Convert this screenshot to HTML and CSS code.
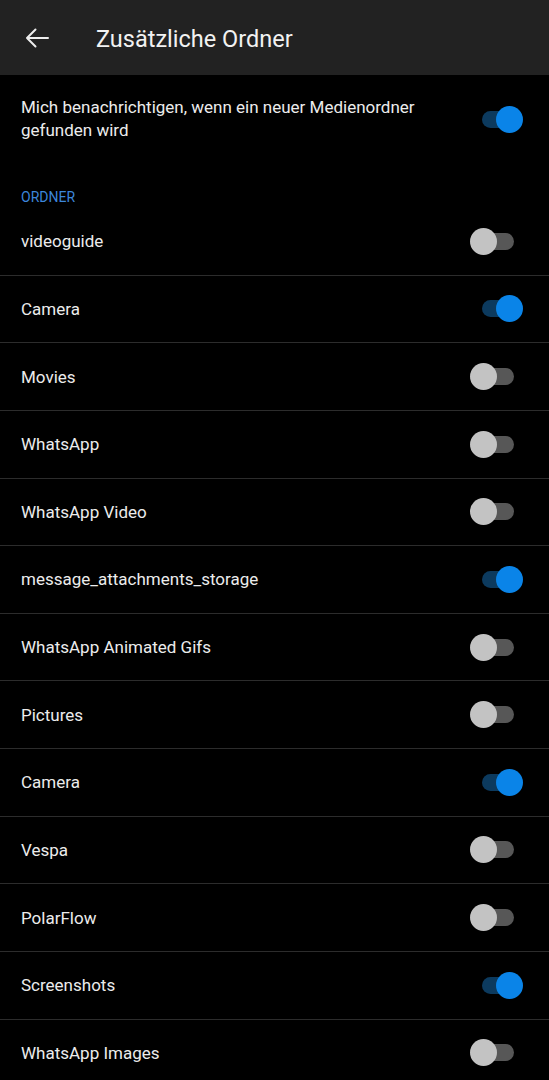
FILE: index.html
```html
<!DOCTYPE html>
<html lang="de">
<head>
  <meta charset="UTF-8">
  <meta name="viewport" content="width=device-width, initial-scale=1.0">
  <title>Zusätzliche Ordner</title>
  <link rel="stylesheet" href="styles.css">
</head>
<body>
  <header class="appbar">
    <button class="back" aria-label="Zurück">
      <svg width="24" height="20" viewBox="0 0 24 20">
        <path d="M2 10H23M2 10L10.5 1.5M2 10L10.5 18.5" fill="none" stroke="#ededed" stroke-width="2" stroke-linecap="round" stroke-linejoin="round"/>
      </svg>
    </button>
    <h1>Zusätzliche Ordner</h1>
  </header>

  <div class="notify">
    <p>Mich benachrichtigen, wenn ein neuer Medienordner gefunden wird</p>
    <span class="switch on"></span>
  </div>

  <div class="subheader">ORDNER</div>

  <ul class="folders">
    <li><span>videoguide</span><span class="switch"></span></li>
    <li><span>Camera</span><span class="switch on"></span></li>
    <li><span>Movies</span><span class="switch"></span></li>
    <li><span>WhatsApp</span><span class="switch"></span></li>
    <li><span>WhatsApp Video</span><span class="switch"></span></li>
    <li><span>message_attachments_storage</span><span class="switch on"></span></li>
    <li><span>WhatsApp Animated Gifs</span><span class="switch"></span></li>
    <li><span>Pictures</span><span class="switch"></span></li>
    <li><span>Camera</span><span class="switch on"></span></li>
    <li><span>Vespa</span><span class="switch"></span></li>
    <li><span>PolarFlow</span><span class="switch"></span></li>
    <li><span>Screenshots</span><span class="switch on"></span></li>
    <li><span>WhatsApp Images</span><span class="switch"></span></li>
  </ul>
</body>
</html>
```

FILE: styles.css
```css
body {
  margin: 0;
  background: #000;
  color: #ececec;
  font-family: Roboto, "Noto Sans", sans-serif;
  font-size: 17px;
  overflow: hidden;
}
.appbar {
  height: 75px;
  background: #222222;
  display: flex;
  align-items: center;
}
.back {
  background: none;
  border: none;
  padding: 0;
  margin-left: 25px;
  width: 24px;
  height: 20px;
  display: flex;
}
.appbar h1 {
  margin: 2px 0 0 47px;
  font-size: 23.5px;
  font-weight: 400;
  color: #f2f2f2;
}
.notify {
  display: flex;
  align-items: center;
  justify-content: space-between;
  padding: 21px 26px 22px 21px;
}
.notify p {
  margin: 0;
  max-width: 420px;
  line-height: 23px;
}
.subheader {
  padding: 25px 21px 3px;
  font-size: 14px;
  line-height: 16px;
  color: #3c86da;
}
.folders {
  list-style: none;
  margin: 0;
  padding: 0;
}
.folders li {
  box-sizing: border-box;
  height: 67.64px;
  border-bottom: 1px solid #2c2c2c;
  display: flex;
  align-items: center;
  justify-content: space-between;
  padding: 0 26px 0 21px;
}
.switch {
  position: relative;
  width: 32px;
  height: 17px;
  margin-right: 9px;
  border-radius: 9px;
  background: #575757;
  flex-shrink: 0;
}
.switch::after {
  content: "";
  position: absolute;
  top: -5px;
  left: -12px;
  width: 27px;
  height: 27px;
  border-radius: 50%;
  background: #c3c3c3;
}
.switch.on {
  background: #0c3a5e;
}
.switch.on::after {
  left: 14px;
  background: #0a84e8;
}
```
